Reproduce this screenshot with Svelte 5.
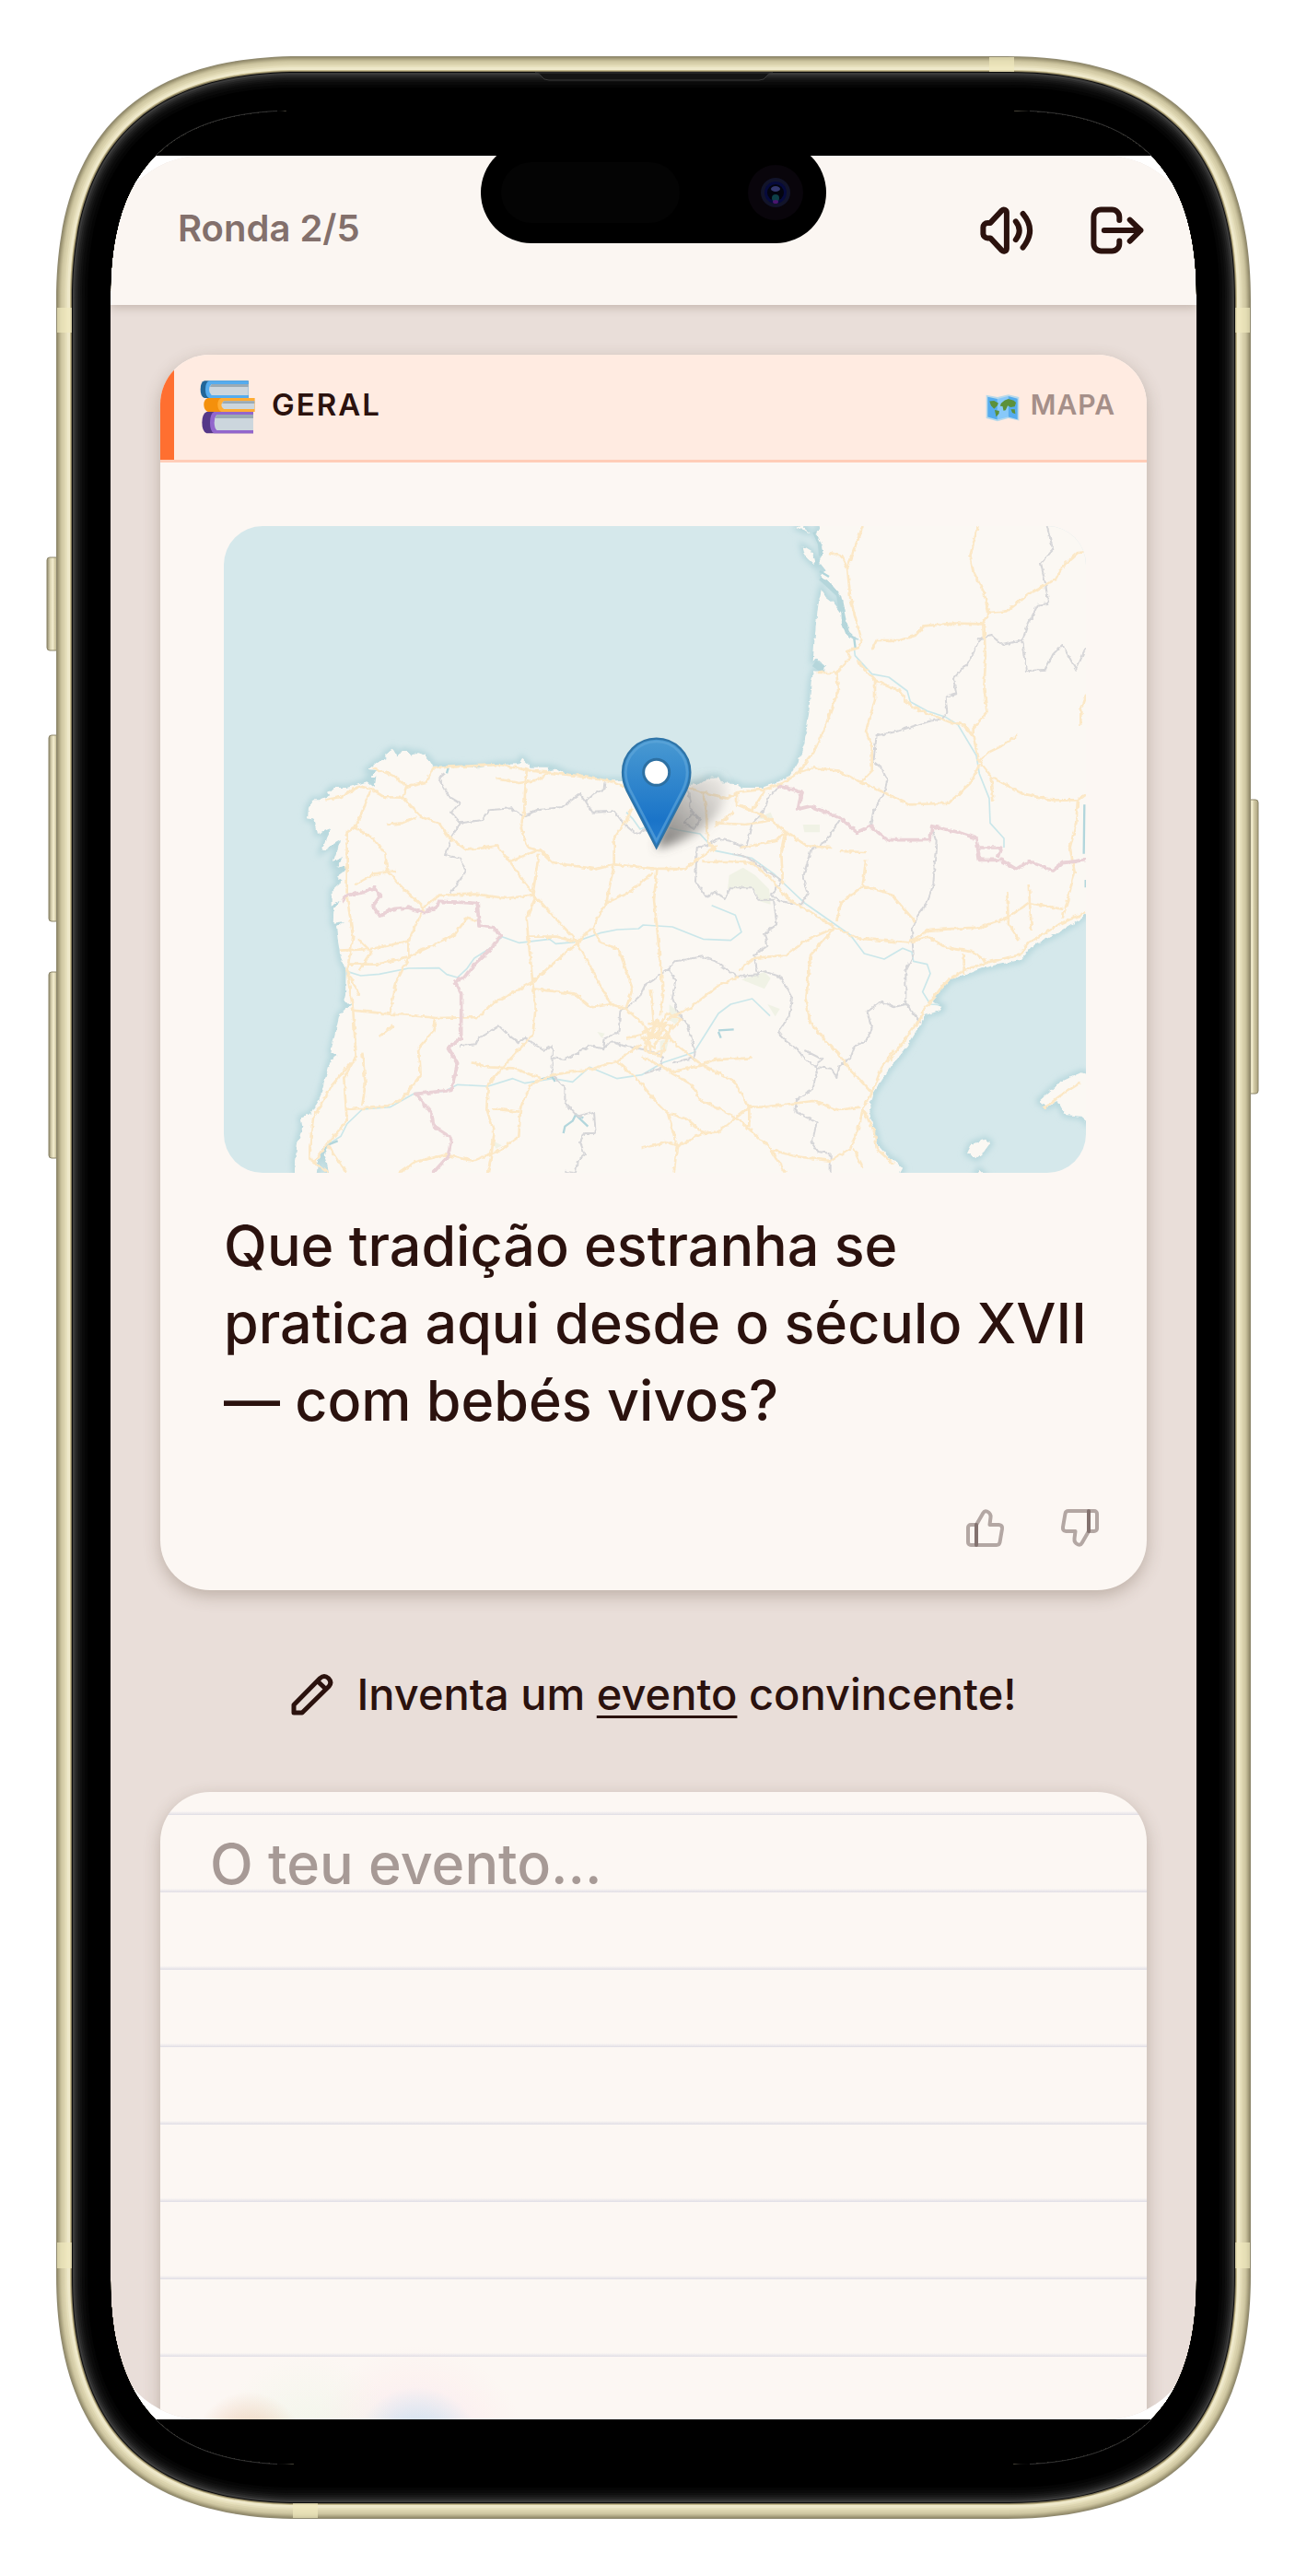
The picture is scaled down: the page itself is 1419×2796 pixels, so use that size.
<script>
	const frameWidth = 1297;
	const frameHeight = 2673;

	let answer = "";
	let muted = false;
	let vote = "";

	// Rounded outline of the phone, `d` pixels in from its outer edge
	function outline(d) {
		const e = 265 - 1.1 * d;
		const mid = 66 - 0.29 * d;
		const k = (4 - (8 * mid) / e) / 3;
		const c = e * (1 - k);
		const l = d;
		const t = d;
		const r = frameWidth - d;
		const b = frameHeight - d;
		return (
			`M${l + e} ${t}H${r - e}C${r - c} ${t} ${r} ${t + c} ${r} ${t + e}` +
			`V${b - e}C${r} ${b - c} ${r - c} ${b} ${r - e} ${b}` +
			`H${l + e}C${l + c} ${b} ${l} ${b - c} ${l} ${b - e}` +
			`V${t + e}C${l} ${t + c} ${l + c} ${t} ${l + e} ${t}Z`
		);
	}

	const screenHole = outline(59);

	// Metal edge first, then the soft light on the black bezel
	const rings = [
		[0, "#908a70"],
		[1, "#98906f"],
		[2, "#a69e7c"],
		[3, "#b3ab88"],
		[4, "#c0b893"],
		[5, "#cac29d"],
		[6, "#d3cba6"],
		[8, "#dcd4af"],
		[10, "#e6dfbc"],
		[12, "#eee8ca"],
		[14, "#f0eacd"],
		[15, "#c5ba8c"],
		[16, "#857b5c"],
		[17, "#0c0c0c"],
		[18, "#3c3c3c"],
		[20, "#2c2c2c"],
		[22, "#202020"],
		[24, "#171717"],
		[26, "#101010"],
		[28, "#0a0a0a"],
		[31, "#050505"],
		[34, "#000000"],
	];

	const land =
		"M1980 33L1967 58 1985 90 1990 120 1978 150 2000 178 1985 196 2020 225 2050 262 2064 330 2077 378 2108 404 2090 402 2065 385 2052 350 2050 315 2030 288 2000 265 1985 240 1975 290 1967 360 1958 470 1970 463 1998 490 1995 508 1962 505 1952 540 1945 640 1930 740 1910 800 1880 850 1840 868 1790 885 1730 885 1700 870 1660 868 1650 850 1620 852 1590 872 1540 877 1500 865 1440 865 1380 862 1280 862 1200 850 1150 838 1120 822 1095 832 1098 818 1040 818 1010 790 1000 808 930 810 870 820 780 815 720 815 705 790 690 778 665 770 650 782 640 765 620 765 605 785 590 760 565 775 565 790 540 800 510 825 538 828 515 848 535 850 530 885 505 865 490 870 440 885 395 885 378 900 385 910 350 925 330 925 315 950 312 985 335 990 345 1035 385 1018 358 1090 420 1055 395 1125 430 1110 405 1145 435 1140 440 1150 405 1175 425 1190 392 1220 392 1268 420 1250 397 1280 395 1325 430 1320 405 1335 410 1380 420 1440 437 1480 435 1560 430 1580 455 1590 435 1605 415 1625 400 1690 388 1745 408 1757 388 1770 370 1830 350 1900 325 1945 290 1960 295 1990 280 2040 270 2100 275 2160 340 2160 345 2100 360 2060 385 2045 365 2080 375 2110 385 2160 2230 2160 2250 2125 2225 2100 2210 2095 2170 2050 2158 2000 2140 1940 2155 1880 2210 1795 2260 1735 2300 1670 2325 1625 2375 1610 2380 1596 2345 1580 2405 1510 2450 1495 2520 1470 2635 1445 2675 1400 2760 1355 2810 1325 2870 1280 2870 0 1980 0Z" +
		"M1925 100L1955 118 1965 160 1932 128ZM1900 36L1950 55 1925 34Z" +
		"M2695 1905L2760 1845 2830 1813 2870 1820 2870 1990 2830 1955 2780 1950 2755 1905 2720 1925Z" +
		"M2460 2075L2475 2045 2520 2030 2535 2042 2515 2070 2490 2092ZM2500 2130L2515 2145 2490 2145Z";

	const parks = [
		"M1685 1170L1730 1145 1770 1170 1815 1215 1820 1265 1785 1255 1760 1210 1680 1215Z",
		"M1725 1510L1800 1485 1820 1505 1800 1540Z",
		"M1810 1590L1850 1605 1835 1630Z",
		"M1490 1590L1530 1625 1510 1655 1490 1640Z",
		"M1460 1710L1490 1700 1480 1740 1460 1760Z",
		"M1925 1005L1980 1005 1980 1030 1930 1030Z",
		"M1775 985L1820 965 1830 990Z",
		"M1255 1680L1280 1685 1270 1700Z",
		"M915 2035L945 2050 925 2060Z",
	];

	const rivers = [
		"M440 1483L485 1497 545 1492 640 1473 740 1472 765 1493 800 1503 830 1475 855 1440 910 1405 945 1370 1000 1390 1100 1378 1120 1393 1180 1388 1265 1358 1320 1347 1390 1344 1405 1332 1500 1338 1600 1378 1690 1382 1725 1355 1705 1300 1628 1268",
		"M380 2045L420 2020 440 1980 490 1932 580 1925 660 1880 760 1873 800 1852 900 1857 980 1832 1020 1847 1110 1832 1175 1843 1230 1795 1320 1832 1400 1820 1470 1780 1570 1747 1650 1620 1690 1590 1760 1572 1818 1628",
		"M1490 1015L1520 1023 1590 1035 1640 1090 1760 1115 1830 1165 1930 1260 2080 1365 2125 1425 2190 1443 2250 1408 2280 1420 2285 1450 2330 1460 2340 1490 2315 1550 2340 1590 2370 1592",
		"M2092 430L2095 455 2150 515 2205 525 2265 570 2275 605 2330 635 2390 655 2430 680 2490 780 2500 840 2532 920 2535 1000 2580 1050 2580 1080",
		"M1350 965L1370 985 1395 1020 1420 1010",
	];

	const lakes = [
		"M1070 1835L1108 1825 1118 1842",
		"M1145 2010L1150 1988 1175 1970 1185 1950 1225 1988M1185 1950L1210 1960",
		"M1650 1680L1658 1700M1650 1675L1700 1672",
		"M360 2065L385 2045 410 2035",
		"M770 820L765 838",
		"M1980 180L2010 198",
		"M2092 400L2096 430",
		"M2842 940L2840 1100M2846 1185L2846 1210",
	];

	const borders = [
		"M760 838L740 855 775 915 808 935 780 965 810 1000 880 990 905 958 975 952 1015 978 1060 958 1140 948 1200 905 1218 930 1240 965 1310 962 1345 1005 1380 1035 1420 1020",
		"M1218 930L1245 905 1280 888 1282 868",
		"M810 1000L780 1045 762 1105 810 1115 828 1160 775 1230",
		"M810 1725L860 1720 870 1700 935 1660 965 1690 1000 1715 1020 1700 1085 1740 1110 1725 1108 1820 1150 1860 1150 1910 1190 1955 1245 1940 1250 2010 1215 2010 1200 2040 1215 2080 1190 2100 1185 2140 1150 2135",
		"M1110 1765L1150 1770 1190 1750 1230 1725 1275 1735 1300 1710 1340 1725 1420 1740 1470 1760 1460 1800 1410 1815",
		"M1275 1735L1280 1700 1325 1680 1330 1610 1355 1600 1390 1570 1410 1530 1440 1510 1485 1475 1510 1510 1500 1570 1520 1620 1550 1660 1575 1740 1570 1765 1500 1780",
		"M1485 1475L1510 1450 1600 1435 1640 1450 1690 1485 1710 1500 1780 1495 1790 1480 1850 1500 1890 1570 1880 1630 1845 1680 1870 1710 1910 1740 1930 1770 1975 1795 2020 1800 2035 1830 2045 1790 2080 1765 2095 1725 2130 1710 2150 1670 2135 1615 2180 1580 2220 1600 2260 1590 2260 1480 2285 1430 2280 1350 2300 1300 2330 1260 2350 1200 2355 1120 2360 1060 2345 1020",
		"M1780 1495L1765 1430 1810 1400 1800 1360 1840 1330 1830 1250 1780 1250 1760 1210 1690 1210 1670 1245 1640 1225 1610 1240 1575 1190 1580 1080 1620 1070",
		"M1620 1070L1650 1050 1690 1060 1740 1080 1760 1000 1800 960 1815 910 1845 885",
		"M1700 1100L1740 1110 1800 1150 1860 1190 1820 1235 1850 1255 1920 1265 1940 1230 1925 1180 1950 1090 2000 1060 2045 990",
		"M1550 880L1560 960 1590 990 1570 1020 1540 1000 1565 970",
		"M2145 1010L2155 960 2190 900 2200 860 2180 820 2155 800 2165 715 2220 705 2330 670 2380 660 2395 640 2390 590 2425 580 2415 530 2470 470 2500 400 2540 390 2575 420 2640 405 2655 360 2690 290 2725 285 2715 220 2700 155 2740 110 2720 33",
		"M2640 405L2655 505 2715 500 2740 450 2770 420 2815 500 2847 430",
		"M2260 1590L2310 1650M1975 1795L1955 1870 1905 1900 1900 1940 1970 1975 1955 2040 1975 2070 2015 2075 2015 2140",
		"M1930 1740L1990 1770 1960 1795M1990 33",
	];

	const countries = [
		"M425 1255L440 1235 500 1225 530 1210 550 1235 525 1270 545 1302 590 1280 640 1275 690 1292 735 1272 740 1255 815 1258 865 1262 870 1335 915 1340 942 1365 910 1410 860 1455 820 1505 792 1515 812 1555 812 1700 770 1730 800 1785 780 1870 665 1882 712 1940 725 1990 780 2025 770 2085 715 2145",
		"M1845 880L1890 890 1920 900 1910 955 1950 945 2050 985 2100 1030 2145 1010 2200 1055 2340 1055 2345 1010 2430 1030 2490 1050 2500 1120 2570 1120 2620 1150 2660 1125 2740 1155 2770 1130 2847 1120",
		"M2500 1080L2570 1080 2560 1110",
	];

	const roads = [
		"M370 925L420 915 480 880 520 890 560 915 625 918 680 980 740 1000 770 1045 830 1088 930 1075 970 1125 1045 1230 1180 1375 1245 1490 1300 1590 1350 1605 1400 1650",
		"M525 820L590 845 635 880 700 865 720 820 830 815 940 810 1040 830 1180 845 1290 862 1340 880M635 880L622 918",
		"M515 895L500 940 465 1015 440 1030 440 1180 440 1240 460 1370 440 1480 460 1610 470 1760 420 1820 395 1850 330 1960 315 2090 380 2140",
		"M465 1015L525 1050 565 1100 570 1150 600 1190 690 1275 640 1385 640 1440 600 1520 580 1620",
		"M465 1200L530 1165 600 1155M690 1275L740 1235 860 1232 960 1245 1045 1235 1065 1100",
		"M1025 830L1020 900 1017 970 1005 1010 1030 1080 1070 1090 1110 1128 1250 1150 1310 1135 1440 1148 1540 1150 1620 1090 1640 1075",
		"M970 1125L1060 1090M1310 1135L1310 1050 1345 1000 1370 950",
		"M1310 1135L1285 1260 1240 1340 1190 1390 1040 1520 910 1590 870 1632 730 1635 640 1625 580 1622 460 1610",
		"M1285 1260L1360 1225 1440 1160M1240 1340L1265 1390 1325 1410 1370 1540 1350 1600",
		"M1055 1240L1025 1310 1030 1370 1045 1520 1055 1600 1045 1690 980 1760 900 1850 895 1930 920 2010 910 2080 900 2140",
		"M1030 1370L1120 1370 1180 1385M1045 1540L1180 1555 1235 1600 1300 1590",
		"M420 1415L520 1410 640 1385M440 1460L540 1460 640 1435 790 1365 830 1310 865 1320M475 1375L520 1420 480 1480",
		"M730 1635L720 1680 675 1730 680 1820 620 1900 560 1925 440 1932M440 1480L480 1560",
		"M490 1745L500 1850 490 1920M470 1760L430 1830 440 1970 380 2040 330 2110M380 2050L440 2140",
		"M610 2140L660 2105 760 2080 850 2100 940 2065 1000 2020 1005 1930 1040 1850 1110 1820 1240 1800 1320 1775 1400 1720",
		"M845 1780L900 1795 980 1798 1070 1830M915 1930L1000 1940",
		"M1440 1660L1430 1540M1400 1650L1440 1700 1480 1620 1530 1640 1470 1700 1420 1680 1430 1750 1480 1740",
		"M1400 1680L1480 1650 1440 1730 1400 1700 1490 1700 1450 1640 1410 1740 1460 1760 1500 1660 1420 1650",
		"M1460 1630L1470 1560 1450 1340 1440 1250 1450 1150M1480 1640L1560 1600 1650 1530 1715 1500",
		"M1410 1720L1470 1670 1500 1710 1560 1760 1600 1790 1700 1840 1750 1925 1750 1990",
		"M1400 1760L1460 1790 1500 1810 1590 1790 1640 1770 1760 1765M1320 1775L1370 1820 1400 1850 1440 1900 1485 1945 1515 2050 1505 2140",
		"M1490 1810L1560 1850 1590 1900 1710 1960 1820 2060 1870 2140M1485 1945L1550 1965 1600 2010 1650 2005 1750 1925 1800 1925 1960 1905 2040 1935 2110 1925",
		"M1400 2060L1480 2040 1520 2050 1600 2010M1825 2065L1900 2085 2015 2100 2080 2060 2110 1980 2120 1930 2150 1880",
		"M2120 1930L2160 2010 2165 2060 2220 2110M2090 2060L2120 2120M2150 1880L2060 1780 2040 1750 2000 1710 1950 1650 1935 1580 1950 1430 2030 1340",
		"M2150 1880L2180 1800 2220 1740M2320 1620L2260 1700 2210 1770M2310 1620L2340 1580 2400 1510 2450 1480 2540 1450 2630 1430 2660 1390 2760 1330 2847 1290",
		"M1600 1125L1680 1125 1760 1130 1820 1180 1880 1250 1950 1290 2030 1340 2100 1375 2270 1390 2330 1350 2400 1345 2500 1340 2590 1310 2660 1260 2770 1280",
		"M2030 1340L1940 1380 1870 1430 1765 1440 1715 1480M2270 1390L2330 1370 2390 1405 2480 1420 2520 1450M2035 1320L2050 1260 2120 1205 2210 1230 2290 1320",
		"M2120 1205L2130 1120M1860 1200L1855 1100 1870 1030 1940 1075 2020 1080M2045 1092L2130 1095",
		"M1530 875L1600 900 1610 960 1615 1060 1640 1090M1600 900L1680 920 1710 900 1800 890 1860 870 1910 835 1960 820 2040 830 2110 865 2200 905 2270 940 2400 935 2470 870 2500 810",
		"M1710 900L1710 940 1760 960 1820 990 1870 1030M1760 960L1800 895M1640 1010L1700 965",
		"M1720 1080L1830 1060 1870 1030M1640 1000L1740 1005 1830 990",
		"M1910 835L1960 770 2000 680 2040 570 2035 510 2080 460 2070 440 2105 430 2115 400 2080 270 2070 170 2095 100 2120 33",
		"M1970 510L2035 510M2010 120L2050 130 2070 170",
		"M2100 470L2160 535 2240 570 2275 620 2400 670 2450 680 2480 720 2500 800 2540 850 2640 905 2740 925 2820 925 2847 905",
		"M2160 535L2160 600 2130 700 2150 750 2150 830 2115 865M2150 435L2165 405 2240 405 2290 390 2320 358 2420 350 2510 352 2530 315 2590 310 2660 255 2750 205 2770 165 2820 120 2847 118",
		"M2530 315L2515 250 2480 180 2470 130 2495 33M2515 352L2520 470 2515 560 2525 640 2480 690 2480 720",
		"M2500 800L2530 770 2570 750 2625 715M2540 850L2545 930M2847 580L2830 630 2830 680M2820 925L2815 1000 2795 1080 2810 1160 2780 1280 2770 1310",
		"M2590 1225L2595 1330 2630 1380M2660 1200L2670 1350M2450 1425L2450 1490M2710 1930L2760 1890 2830 1845",
		"M545 1695L590 1660M568 1005L620 1000 665 980M925 855L1000 870 1060 860 1100 835M1350 1700L1400 1690 1440 1660",
	];
</script>

<main class="page">
	<div class="phone">
		<div class="screen">
			<div class="app">
				<header class="topbar">
					<p class="round">Ronda 2/5</p>
					<div class="actions">
						<button
							type="button"
							aria-label="Som"
							aria-pressed={muted}
							on:click={() => (muted = !muted)}
						>
							<svg viewBox="0 0 24 24" class="line-icon">
								<path
									d="M5.4 9.3H6.4L10.6 4.8C11.2 4.2 12.3 4.6 12.3 5.5V18.6C12.3 19.5 11.2 19.9 10.6 19.3L6.4 14.8H5.4A1.6 1.6 0 0 1 3.8 13.2V10.9A1.6 1.6 0 0 1 5.4 9.3Z"
								/>
								<path d="M15.6 8.8Q18.2 12 15.6 15.4" />
								<path d="M18.2 6Q23.2 12 18.2 18.2" />
							</svg>
						</button>
						<button type="button" aria-label="Sair">
							<svg viewBox="0 0 24 24" class="line-icon">
								<path
									d="M13.1 8.3V7.2A2.7 2.7 0 0 0 10.4 4.5H6.5A2.7 2.7 0 0 0 3.8 7.2V16.8A2.7 2.7 0 0 0 6.5 19.5H10.4A2.7 2.7 0 0 0 13.1 16.8V15.8"
								/>
								<path d="M7.6 12H20.8M16.9 8.2L20.8 12L16.9 15.9" />
							</svg>
						</button>
					</div>
				</header>

				<div class="content">
					<article class="card">
						<div class="card-head">
							<svg class="books" viewBox="530 1116 180 180">
								<path d="M545 1120H688V1176H545Q532 1172 532 1148T545 1120Z" fill="#226699" />
								<path d="M560 1120H688V1176H560Q548 1170 548 1148T560 1120Z" fill="#55acee" />
								<path d="M568 1131H688V1167H568Q560 1160 560 1149T568 1131Z" fill="#ccd6dd" />
								<path d="M568 1131H688V1140H563Z" fill="#9aaab4" />
								<path d="M556 1176H708V1221H556Q543 1216 543 1198T556 1176Z" fill="#f4900c" />
								<path d="M600 1176H708V1221H600Q588 1216 588 1198T600 1176Z" fill="#ffac33" />
								<path d="M608 1186H708V1212H608Q600 1207 600 1199T608 1186Z" fill="#ccd6dd" />
								<path d="M608 1186H708V1194H602Z" fill="#9aaab4" />
								<path d="M552 1221H704V1291H552Q537 1284 537 1256T552 1221Z" fill="#553788" />
								<path d="M576 1221H704V1291H576Q563 1284 563 1256T576 1221Z" fill="#9266cc" />
								<path d="M585 1230H704V1281H585Q577 1272 577 1256T585 1230Z" fill="#ccd6dd" />
								<path d="M585 1230H704V1242H580Z" fill="#9aaab4" />
							</svg>
							<span class="category">Geral</span>
							<svg class="tiny-map" viewBox="382 1162 112 93">
								<path d="M384 1167L421 1174 457 1165 492 1174V1251L457 1243 421 1253 384 1243Z" fill="#b9d9ea" />
								<path d="M389 1173L421 1180V1248L389 1239Z" fill="#55acee" />
								<path d="M421 1180L457 1171V1239L421 1248Z" fill="#88c9f9" />
								<path d="M457 1171L487 1179V1247L457 1239Z" fill="#55acee" />
								<path
									d="M395 1187L410 1186 424 1193 421 1202 410 1212 400 1202ZM412 1216L427 1219 426 1228 417 1239ZM433 1194L445 1184 457 1180 475 1185 482 1192 478 1205 464 1207 455 1202 448 1217 441 1218 438 1204 430 1203ZM465 1214L478 1214 480 1229 470 1225Z"
									fill="#5c913b"
								/>
							</svg>
							<span class="kind">Mapa</span>
						</div>

						<div class="card-body">
							<svg
								class="map"
								viewBox="39 33 2808 2106"
								role="img"
								aria-label="Mapa com marcador no norte de Espanha"
							>
								<defs>
									<filter id="coast" x="-5%" y="-5%" width="110%" height="110%">
										<feGaussianBlur stdDeviation="9" />
									</filter>
									<filter
										id="rough"
										x="0"
										y="0"
										width="100%"
										height="100%"
										color-interpolation-filters="sRGB"
									>
										<feTurbulence type="fractalNoise" baseFrequency="0.06" numOctaves="2" seed="4" />
										<feDisplacementMap
											in="SourceGraphic"
											scale="14"
											xChannelSelector="R"
											yChannelSelector="G"
										/>
									</filter>
									<filter id="soft" x="-60%" y="-60%" width="220%" height="220%">
										<feGaussianBlur stdDeviation="16" />
									</filter>
									<linearGradient id="pin" x1="0" y1="0" x2="0" y2="1">
										<stop offset="0" stop-color="#4a9ad2" />
										<stop offset="0.75" stop-color="#1a74c8" />
										<stop offset="1" stop-color="#2a80d0" />
									</linearGradient>
									<linearGradient id="shade" x1="0" y1="1" x2="1" y2="0">
										<stop offset="0" stop-color="#5d5b59" stop-opacity="0.85" />
										<stop offset="1" stop-color="#8d8b88" stop-opacity="0.1" />
									</linearGradient>
								</defs>
								<rect x="39" y="33" width="2808" height="2106" fill="#d5e8eb" />
								<path d={land} fill="none" stroke="#b4d6db" stroke-width="18" filter="url(#coast)" />
								<path
									d="M1967 50L1985 90 1988 130M1985 200L2045 255 2056 330 2070 385M1962 480L1990 500"
									fill="none"
									stroke="#b5d6db"
									stroke-width="22"
								/>
								<path d={land} fill="#fbf8f3" filter="url(#rough)" />
								<g fill="#f0f2e5">
									{#each parks as d}
										<path {d} />
									{/each}
								</g>
								<g class="strokes">
									{#each rivers as d}
										<path {d} class="river" />
									{/each}
									{#each lakes as d}
										<path {d} class="lake" />
									{/each}
								</g>
								<g class="strokes" filter="url(#rough)">
									{#each borders as d}
										<path {d} class="region" />
									{/each}
									{#each roads as d}
										<path {d} class="road" />
									{/each}
									{#each countries as d}
										<path {d} class="country" />
									{/each}
								</g>
								<path
									d="M1448 1082L1490 930Q1560 830 1660 850Q1700 900 1640 980Q1560 1060 1448 1082Z"
									fill="url(#shade)"
									filter="url(#soft)"
								/>
								<path
									d="M1448 1080L1352 895Q1338 865 1338 835A110 110 0 0 1 1558 835Q1558 865 1544 895Z"
									fill="url(#pin)"
									stroke="#2e74a8"
									stroke-width="7"
								/>
								<path
									d="M1448 1058L1361 890Q1348 862 1348 835A100 100 0 0 1 1548 835Q1548 862 1535 890Z"
									fill="none"
									stroke="#62a9db"
									stroke-opacity="0.6"
									stroke-width="8"
								/>
								<circle cx="1448" cy="835" r="42" fill="#fff" stroke="#2d70a3" stroke-width="9" />
							</svg>

							<h1>Que tradição estranha se pratica aqui desde o século XVII — com bebés vivos?</h1>
						</div>

						<div class="votes">
							<button
								type="button"
								aria-label="Gosto"
								aria-pressed={vote === "up"}
								on:click={() => (vote = "up")}
							>
								<svg viewBox="-4 -4 49 49" class="thumb">
									<path d="M11 17H5A3 3 0 0 0 2 20V36A3 3 0 0 0 5 39H11Z" />
									<path d="M11 17L18.5 4Q20 1.5 22.5 2.5Q27 4.5 26.5 9L25.5 17H35.5Q39.5 17.5 39 21.5L36.5 36Q36 39 33 39H11Z" />
								</svg>
							</button>
							<button
								type="button"
								aria-label="Não gosto"
								aria-pressed={vote === "down"}
								on:click={() => (vote = "down")}
							>
								<svg viewBox="-4 -4 49 49" class="thumb">
									<g transform="rotate(180 20.5 20.5)">
										<path d="M11 17H5A3 3 0 0 0 2 20V36A3 3 0 0 0 5 39H11Z" />
										<path d="M11 17L18.5 4Q20 1.5 22.5 2.5Q27 4.5 26.5 9L25.5 17H35.5Q39.5 17.5 39 21.5L36.5 36Q36 39 33 39H11Z" />
									</g>
								</svg>
							</button>
						</div>
					</article>

					<label class="prompt" for="answer">
						<svg viewBox="-1 -1 48 48">
							<path d="M3 43V34.5L31.5 5.5Q36 1.5 40.5 5.5Q45 10 41 14.5L12 43ZM28.5 8.5L38 17.5" />
						</svg>
						<span>Inventa um <u>evento</u> convincente!</span>
					</label>

					<textarea id="answer" placeholder="O teu evento..." bind:value={answer}></textarea>
				</div>

				<div class="glow"></div>
			</div>
		</div>

		<svg class="frame" viewBox="0 0 {frameWidth} {frameHeight}" preserveAspectRatio="none">
			<defs>
				<linearGradient id="side" x1="0" y1="0" x2="1" y2="0">
					<stop offset="0" stop-color="#8f886d" />
					<stop offset="0.25" stop-color="#d9d2b0" />
					<stop offset="0.45" stop-color="#f3edcf" />
					<stop offset="0.6" stop-color="#d5cda8" />
					<stop offset="1" stop-color="#a9a07c" />
				</linearGradient>
				<clipPath id="bezel">
					<path d="M0 0H1297V108H0ZM0 2565H1297V2673H0Z" />
				</clipPath>
				<clipPath id="corners">
					<path d="M0 0H240V108H0ZM1057 0H1297V108H1057ZM0 2565H240V2673H0ZM1057 2565H1297V2673H1057Z" />
				</clipPath>
			</defs>
			<g fill="url(#side)" stroke="#8c8569" stroke-width="1">
				<rect x="-10" y="544" width="14" height="101" rx="3" />
				<rect x="-8" y="737" width="12" height="202" rx="3" />
				<rect x="-8" y="994" width="12" height="202" rx="3" />
				<rect x="1293" y="807" width="12" height="319" rx="3" />
			</g>
			<path d={screenHole} clip-path="url(#bezel)" />
			{#each rings as [inset, color]}
				<path d={outline(inset) + screenHole} fill={color} fill-rule="evenodd" />
			{/each}
			<g fill="#f0e8bd" fill-opacity="0.7">
				<rect x="1" y="273" width="16" height="27" />
				<rect x="1280" y="273" width="16" height="27" />
				<rect x="1" y="2373" width="16" height="28" />
				<rect x="1280" y="2373" width="16" height="28" />
				<rect x="1013" y="1" width="27" height="16" />
				<rect x="257" y="2656" width="27" height="16" />
			</g>
			<path d={screenHole} clip-path="url(#corners)" fill="none" stroke="#333" stroke-width="1" />
			<path d="M520 18Q525 18 527 22Q529 26 535 26H763Q769 26 771 22Q773 18 778 18Z" fill="#141414" stroke="#3a3a3a" stroke-width="1" />
			<rect x="461" y="93" width="375" height="110" rx="55" />
			<rect x="483" y="115" width="194" height="66" rx="33" fill="#040404" />
			<circle cx="781" cy="148" r="30" fill="#09050b" />
			<circle cx="781" cy="148" r="16" fill="#12142a" />
			<circle cx="781" cy="148" r="12" fill="#060a3c" />
			<circle cx="781" cy="148" r="9" fill="#03040f" />
			<ellipse cx="781" cy="144" rx="5" ry="3" fill="#33376f" />
			<circle cx="781" cy="154" r="4" fill="#0d3f48" />
			<ellipse cx="781" cy="158" rx="3" ry="2" fill="#4b166e" />
		</svg>
	</div>
</main>

<style>
	:global(body) {
		background: #fff;
	}

	.page {
		box-sizing: border-box;
		min-height: 100vh;
		padding: 61px 61px 62px;
		display: flex;
		font-family: Inter, "Noto Sans", sans-serif;
		color: #2b120e;
	}

	.phone {
		position: relative;
		flex: 1;
		min-width: 0;
		display: flex;
		padding: 108px 59px;
	}

	.frame {
		position: absolute;
		inset: 0;
		width: 100%;
		height: 100%;
		overflow: visible;
		pointer-events: none;
	}

	.screen {
		flex: 1;
		min-width: 0;
		display: flex;
		background: #fff;
	}

	.app {
		position: relative;
		flex: 1;
		min-width: 0;
		display: flex;
		flex-direction: column;
		overflow: hidden;
		border-radius: 99px;
		background: #e9ded9;
	}

	button {
		display: flex;
		align-items: center;
		justify-content: center;
		padding: 0;
		border: 0;
		background: none;
		color: inherit;
		cursor: pointer;
	}

	.topbar {
		display: flex;
		align-items: center;
		justify-content: space-between;
		height: 162px;
		padding: 0 27px 0 73px;
		background: #fbf6f2;
		box-shadow: 0 3px 9px rgba(90, 70, 50, 0.25);
	}

	.round {
		margin: 0 0 6px;
		font-size: 40px;
		font-weight: 600;
		color: #83706c;
	}

	.actions {
		display: flex;
	}

	.actions button {
		width: 120px;
		height: 120px;
	}

	.line-icon {
		width: 72px;
		height: 72px;
		fill: none;
		stroke: currentColor;
		stroke-width: 2;
		stroke-linecap: round;
		stroke-linejoin: round;
	}

	.content {
		flex: 1;
		display: flex;
		flex-direction: column;
		padding: 54px 54px 0;
	}

	.card {
		overflow: hidden;
		border-radius: 54px;
		background: #fcf7f3;
		box-shadow: 0 6px 18px rgba(90, 70, 50, 0.3);
	}

	.card-head {
		display: flex;
		align-items: center;
		gap: 18px;
		height: 114px;
		padding: 0 34px 0 43px;
		border-bottom: 3px solid #ffcdb8;
		background: linear-gradient(to right, #ff6f30 15px, #ffebe1 15px);
	}

	.books {
		width: 60px;
		height: 60px;
	}

	.category,
	.kind {
		margin-bottom: 6px;
		font-size: 33px;
		font-weight: 600;
		letter-spacing: 2px;
		text-transform: uppercase;
	}

	.kind {
		margin-left: -6px;
		font-size: 30px;
		letter-spacing: 1px;
		color: #a58f89;
	}

	.tiny-map {
		width: 37px;
		height: 31px;
		margin-left: auto;
	}

	.card-body {
		padding: 69px 60px 0 69px;
	}

	.map {
		display: block;
		width: 936px;
		max-width: 100%;
		border-radius: 42px;
	}

	.strokes {
		fill: none;
		stroke-linejoin: round;
	}

	.region {
		stroke: #d6d6d8;
		stroke-width: 6;
	}

	.road {
		stroke: #fce8c6;
		stroke-width: 8;
	}

	.country {
		stroke: #ead2d6;
		stroke-width: 11;
	}

	.river {
		stroke: #cbe7ea;
		stroke-width: 5;
	}

	.lake {
		stroke: #b2d6dc;
		stroke-width: 7;
	}

	h1 {
		margin: 37px 0 0;
		font-size: 61px;
		font-weight: 500;
		line-height: 84px;
	}

	.votes {
		display: flex;
		justify-content: flex-end;
		gap: 6px;
		padding: 48px 24px 19px;
	}

	.votes button {
		width: 97px;
		height: 97px;
	}

	.thumb {
		width: 49px;
		height: 49px;
		fill: none;
		stroke: rgba(43, 18, 14, 0.35);
		stroke-width: 4;
		stroke-linejoin: round;
	}

	.prompt {
		display: flex;
		align-items: center;
		justify-content: center;
		gap: 24px;
		padding: 83px 0 76px;
		font-size: 47px;
		font-weight: 500;
		line-height: 60px;
	}

	.prompt svg {
		width: 48px;
		height: 48px;
		fill: none;
		stroke: currentColor;
		stroke-width: 5;
		stroke-linejoin: round;
	}

	u {
		text-underline-offset: 6px;
		text-decoration-thickness: 3px;
	}

	textarea {
		box-sizing: border-box;
		flex: 1;
		width: 100%;
		min-height: 660px;
		padding: 36px 54px;
		border: 0;
		border-radius: 54px 54px 0 0;
		outline: none;
		resize: none;
		background: #fcf7f3 repeating-linear-gradient(transparent 0 80px, #dfdde6 84px) 0 25px / 100% 84px;
		box-shadow: 0 6px 18px rgba(90, 70, 50, 0.3);
		font: inherit;
		font-size: 61px;
		font-weight: 500;
		line-height: 84px;
		color: inherit;
	}

	textarea::placeholder {
		color: #a79a96;
		opacity: 1;
	}

	/* Coloured light rising from the bottom edge of the screen */
	.glow {
		position: absolute;
		left: 0;
		right: 0;
		bottom: 0;
		height: 100px;
		pointer-events: none;
		background:
			radial-gradient(circle 60px at 150px 130px, rgba(226, 170, 130, 0.6), transparent),
			radial-gradient(circle 100px at 215px 130px, rgba(230, 245, 225, 0.5), transparent),
			radial-gradient(circle 70px at 333px 135px, rgba(160, 215, 240, 0.7), transparent),
			radial-gradient(circle 120px at 333px 140px, rgba(240, 215, 240, 0.5), rgba(255, 228, 232, 0.2) 75%, transparent);
	}
</style>
